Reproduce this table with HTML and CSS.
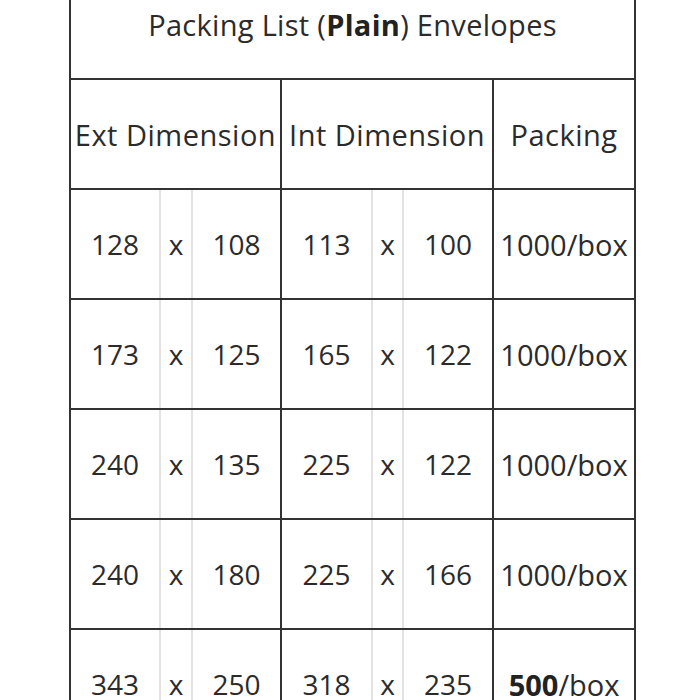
FILE: index.html
```html
<!DOCTYPE html>
<html>
<head>
<meta charset="utf-8">
<link rel="stylesheet" href="styles.css">
</head>
<body>
<table class="sheet">
  <colgroup>
    <col class="c-num"><col class="c-x"><col class="c-num2">
    <col class="c-num3"><col class="c-x2"><col class="c-num4">
    <col class="c-pack">
  </colgroup>
  <tr class="title-row"><td colspan="7">Packing List (<b>Plain</b>) Envelopes</td></tr>
  <tr class="head-row">
    <td colspan="3" class="dark-r">Ext Dimension</td>
    <td colspan="3" class="dark-r">Int Dimension</td>
    <td>Packing</td>
  </tr>
  <tr>
    <td>128</td><td class="x">x</td><td class="dark-r">108</td>
    <td>113</td><td class="x">x</td><td class="dark-r">100</td>
    <td>1000/box</td>
  </tr>
  <tr>
    <td>173</td><td class="x">x</td><td class="dark-r">125</td>
    <td>165</td><td class="x">x</td><td class="dark-r">122</td>
    <td>1000/box</td>
  </tr>
  <tr>
    <td>240</td><td class="x">x</td><td class="dark-r">135</td>
    <td>225</td><td class="x">x</td><td class="dark-r">122</td>
    <td>1000/box</td>
  </tr>
  <tr>
    <td>240</td><td class="x">x</td><td class="dark-r">180</td>
    <td>225</td><td class="x">x</td><td class="dark-r">166</td>
    <td>1000/box</td>
  </tr>
  <tr>
    <td>343</td><td class="x">x</td><td class="dark-r">250</td>
    <td>318</td><td class="x">x</td><td class="dark-r">235</td>
    <td><b>500</b>/box</td>
  </tr>
</table>
</body>
</html>
```

FILE: styles.css
```css
html, body {
  margin: 0;
  padding: 0;
  background: #ffffff;
}
body {
  overflow: hidden;
  height: 700px;
}
.sheet {
  border-collapse: collapse;
  table-layout: fixed;
  width: 567px;
  margin: -32px 0 0 69px;
  font-family: "Open Sans", "DejaVu Sans", sans-serif;
  font-size: 28px;
  font-weight: 500;
  color: #2b2b2b;
}
.c-num { width: 90px; }
.c-x { width: 32px; }
.c-num2 { width: 89px; }
.c-num3 { width: 91px; }
.c-x2 { width: 31px; }
.c-num4 { width: 90px; }
.c-pack { width: 142px; }

.sheet td {
  height: 108px;
  padding: 0;
  text-align: center;
  vertical-align: middle;
  white-space: nowrap;
  border-top: 2px solid #333333;
  border-bottom: 2px solid #333333;
  border-left: 2px solid #e2e2e2;
  border-right: 2px solid #e2e2e2;
}
.sheet td:first-child { border-left: 2px solid #333333; }
.sheet td:last-child { border-right: 2px solid #333333; }
.sheet td.dark-r { border-right: 2px solid #333333; }
.sheet b { font-weight: 700; color: #222222; }
.title-row td { font-size: 29px; letter-spacing: 0.3px; }
.head-row td { font-size: 29px; letter-spacing: 0.5px; }
.pack { letter-spacing: 0.3px; }
.sheet tr td:last-child { font-size: 29px; }
```
